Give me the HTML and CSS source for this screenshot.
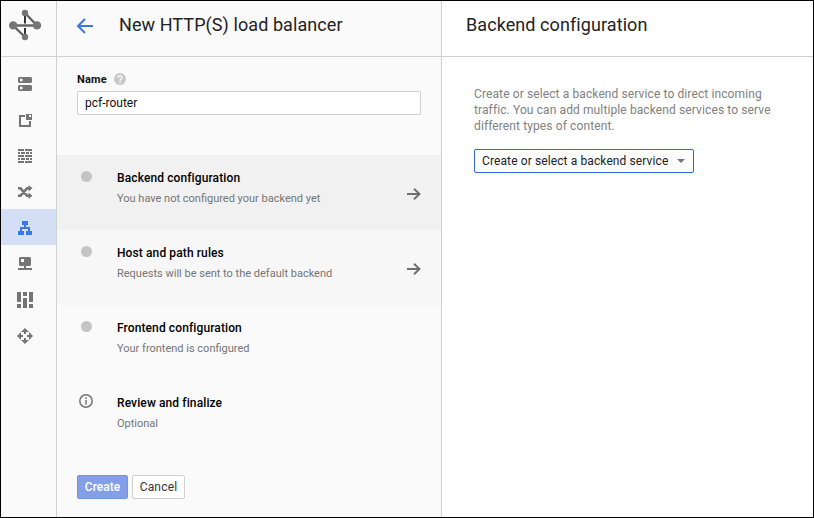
FILE: index.html
```html
<!DOCTYPE html>
<html lang="en">
<head>
<meta charset="utf-8">
<title>New HTTP(S) load balancer</title>
<link rel="stylesheet" href="styles.css">
</head>
<body>
<div class="app">
  <nav class="sidebar">
    <div class="logo">
      <svg width="34" height="34" viewBox="0 0 34 34"><g stroke="#616161" stroke-width="2.4" fill="none"><path d="M5 17.5H29"/><path d="M17 5L29 17.5"/><path d="M5 17.5L17 29"/></g><path d="M17 8v7.500M17 20v6" stroke="#333" stroke-width="2"/><g fill="#757575"><circle cx="17" cy="5" r="3.2"/><circle cx="17" cy="29" r="3.2"/><circle cx="5.200" cy="17.400" r="4.200"/><circle cx="29" cy="17.400" r="4.200"/></g></svg>
    </div>
    <ul class="nav">
      <li><svg viewBox="0 0 20 20"><path fill-rule="evenodd" d="M4 4h12l1 1v4l-1 1H4l-1-1V5zM5 5.700v2.600h2.500V5.700zM4 12h12l1 1v4l-1 1H4l-1-1v-4zM5 13.700v2.600h2.500v-2.600z"/></svg></li>
      <li><svg viewBox="0 0 20 20"><path fill-rule="evenodd" d="M4 6h6v2H6v8h8v-4h2v6H4zM11 5h6v6h-6zM14 6v2h2V6z"/></svg></li>
      <li><svg viewBox="0 0 20 20"><path d="M3 4h6v2H3zM10 4h7v2h-7zM3 7h2v2H3zM6 7h4v2H6zM11 7h3v2h-3zM15 7h2v2h-2zM3 10h6v2H3zM10 10h7v2h-7zM3 13h2v2H3zM6 13h4v2H6zM11 13h3v2h-3zM15 13h2v2h-2zM3 16h6v2H3zM10 16h7v2h-7z"/></svg></li>
      <li><svg viewBox="0 0 20 20"><path class="line" d="M3 7.300h2.500l6.500 7.400H15M3 14.700h2.500L12 7.300H15"/><path d="M13.500 4l4 3.300-4 3.300zM13.500 11.400l4 3.300-4 3.300z"/></svg></li>
      <li class="active"><svg viewBox="0 0 20 20"><path fill-rule="evenodd" d="M7 4h6v4h-2v2h4v4h2v4h-6v-4h2v-2H7v2h2v4H3v-4h2v-4h4V8H7z"/></svg></li>
      <li><svg viewBox="0 0 20 20"><path fill-rule="evenodd" d="M5 4h10l1 1v7l-1 1h-4v2h6v2H3v-2h6v-2H5l-1-1V5zM6 6v3h3V6z"/></svg></li>
      <li><svg viewBox="0 0 20 20"><path d="M2 3h4v10H2zM2 15h4v4H2zM8 3h4v4H8zM8 9h4v10H8zM14 3h4v10h-4zM14 15h4v4h-4z"/></svg></li>
      <li><svg viewBox="0 0 20 20"><path d="M10 3l4 4h-3v2H9V7H6zM10 19l4-4h-3v-2H9v2H6zM2 11l4-4v3h2v2H6v3zM18 11l-4-4v3h-2v2h2v3z"/></svg></li>
    </ul>
  </nav>
  <section class="wizard">
    <header class="bar">
      <svg class="back" width="18" height="18" viewBox="0 0 18 18"><path d="M17 9H2.500M9 2L2 9l7 7"/></svg>
      <h1>New HTTP(S) load balancer</h1>
    </header>
    <div class="field">
      <div class="label"><span>Name</span><svg width="12" height="12" viewBox="0 0 12 12"><circle cx="6" cy="6" r="6" fill="#c8c8c8"/><path d="M4 4.700a2 2 0 1 1 3 1.600Q6 6.800 6 7.700M6 8.700v1.300" fill="none" stroke="#fff" stroke-width="1.300"/></svg></div>
      <input class="input" value="pcf-router" aria-label="Name">
    </div>
    <ol class="steps">
      <li class="current"><i class="dot"></i><div class="text"><h2>Backend configuration</h2><p>You have not configured your backend yet</p></div><svg class="go" width="14" height="12" viewBox="0 0 14 12"><path d="M0 6h12.500M7 .7L12.500 6 7 11.300"/></svg></li>
      <li class="next"><i class="dot"></i><div class="text"><h2>Host and path rules</h2><p>Requests will be sent to the default backend</p></div><svg class="go" width="14" height="12" viewBox="0 0 14 12"><path d="M0 6h12.500M7 .7L12.500 6 7 11.300"/></svg></li>
      <li><i class="dot"></i><div class="text"><h2>Frontend configuration</h2><p>Your frontend is configured</p></div></li>
      <li><svg class="info" width="14" height="14" viewBox="0 0 14 14"><circle cx="7" cy="7" r="6.200"/><path d="M7 3.300v1.700M7 6v4.700"/></svg><div class="text"><h2>Review and finalize</h2><p>Optional</p></div></li>
    </ol>
    <div class="actions"><button class="primary">Create</button><button class="secondary">Cancel</button></div>
  </section>
  <main class="detail">
    <header class="bar"><h1>Backend configuration</h1></header>
    <div class="content">
      <p>Create or select a backend service to direct incoming<br>traffic. You can add multiple backend services to serve<br>different types of content.</p>
      <button class="select"><span>Create or select a backend service</span><i class="caret"></i></button>
    </div>
  </main>
</div>
</body>
</html>
```
FILE: styles.css
```css
* { box-sizing: border-box; }
body { margin: 0; font-family: Roboto, "Liberation Sans", sans-serif; font-size: 12px; color: #111; }
h1, h2, p, ol, ul { margin: 0; padding: 0; list-style: none; }
svg { display: block; flex: none; }
button, input { font: inherit; }

.app { display: grid; grid-template-columns: 56px 385px 1fr; width: 814px; height: 518px; border: 1px solid #000; background: #fff; }
.sidebar, .wizard { background: #fafafa; border-right: 1px solid #d0d0d0; }

.logo { height: 56px; padding: 7px 0 0 7px; border-bottom: 1px solid #d0d0d0; }
.nav { padding-top: 8px; }
.nav li { height: 36px; padding: 8px 0 0 14px; fill: #757575; }
.nav svg { width: 20px; height: 20px; }
.nav .line { fill: none; stroke: #757575; stroke-width: 2.6; }
.nav .active { background: #d4dff6; fill: #3b78e7; }

.bar { display: flex; height: 56px; border-bottom: 1px solid #d0d0d0; }
.bar h1 { font-size: 18px; font-weight: 400; line-height: 24px; margin-top: 12px; color: #222; white-space: nowrap; letter-spacing: .08px; }
.back { margin: 16px 25px 0 19px; fill: none; stroke: #3b78e7; stroke-width: 2; }

.field { height: 98px; padding: 14px 20px 0; }
.label { display: flex; align-items: center; gap: 7px; height: 16px; font-size: 11px; font-weight: 700; letter-spacing: .2px; }
.input { display: block; width: 344px; height: 24px; margin-top: 4px; padding: 0 7px; border: 1px solid #d0d0d0; border-radius: 1px; background: #fff; color: #111; outline: 0; }

.steps li { display: flex; height: 75px; padding: 16px 20px 0 24px; }
.steps .current { background: #f1f1f1; }
.steps .next { background: #f7f7f7; }
.dot { width: 11px; height: 11px; margin-right: 25px; border-radius: 50%; background: #c4c4c4; }
.info { margin: -2px 24px 0 -2px; fill: none; stroke: #757575; stroke-width: 1.5; }
.text { flex: 1; }
.text h2 { font-size: 12px; font-weight: 500; line-height: 14px; letter-spacing: .11px; color: #000; }
.text p { margin-top: 7px; font-size: 11px; line-height: 14px; color: #757575; }
.go { margin-top: 17px; fill: none; stroke: #6e6e6e; stroke-width: 1.9; }

.actions { display: flex; gap: 4px; padding: 20px 20px 0; }
.actions button { height: 24px; padding: 0; border: 1px solid #d0d0d0; border-radius: 2px; letter-spacing: .2px; }
.actions .primary { width: 51px; border-color: #7496e0; background: #839fe5; color: #fff; font-weight: 500; letter-spacing: 0; }
.actions .secondary { width: 53px; background: #fff; color: #333; }

.detail { background: #fff; }
.detail .bar { padding-left: 24px; }
.content { padding: 29px 32px 0; }
.content p { font-size: 12px; line-height: 16px; color: #808080; letter-spacing: .11px; white-space: nowrap; }
.select { display: flex; align-items: center; justify-content: space-between; width: 220px; height: 24px; margin-top: 15px; padding: 0 8px 0 7px; border: 1px solid #3367d6; border-radius: 2px; background: #fcfcfc; color: #222; letter-spacing: .11px; white-space: nowrap; }
.caret { border: 4px solid transparent; border-top-color: #757575; border-bottom: 0; }
```
